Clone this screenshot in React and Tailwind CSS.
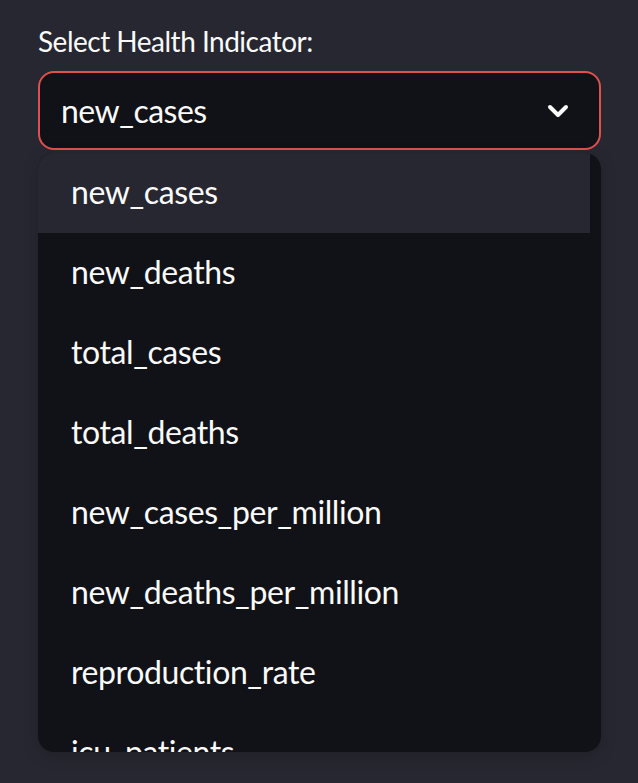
const OPTIONS = [
  "new_cases",
  "new_deaths",
  "total_cases",
  "total_deaths",
  "new_cases_per_million",
  "new_deaths_per_million",
  "reproduction_rate",
  "icu_patients",
];

export default function App() {
  const selected = "new_cases";

  return (
    <div
      className="w-[638px] h-[783px] overflow-hidden bg-[#262730] px-[38px] pt-[21px] text-[#fafafa]"
      style={{ fontFamily: '"Lato", "Open Sans", sans-serif' }}
    >
      <label className="block text-[28px] leading-[40px] tracking-[-0.5px]">Select Health Indicator:</label>

      <div className="mt-[10px] flex h-[79px] w-[563px] items-center justify-between rounded-[16px] border-2 border-[#e2504c] bg-[#111217] pl-[21px] pr-[30px]">
        <span className="text-[32px] tracking-[-0.5px]">{selected}</span>
        <svg width="22" height="14" viewBox="0 0 22 14" fill="none">
          <path d="M3 3l8 8 8-8" stroke="#fafafa" strokeWidth="4" strokeLinecap="round" strokeLinejoin="round" />
        </svg>
      </div>

      <div className="mt-[3px] h-[599px] w-[563px] overflow-hidden rounded-[16px] bg-[#111217] pr-[11px] shadow-[0_4px_16px_rgba(0,0,0,0.18)]">
        {OPTIONS.map((o) => (
          <div
            key={o}
            className={`flex h-[80px] items-center pb-[2px] pl-[33px] text-[32px] tracking-[-0.4px] ${o === selected ? "bg-[#262730]" : ""}`}
          >
            {o}
          </div>
        ))}
      </div>
    </div>
  );
}
